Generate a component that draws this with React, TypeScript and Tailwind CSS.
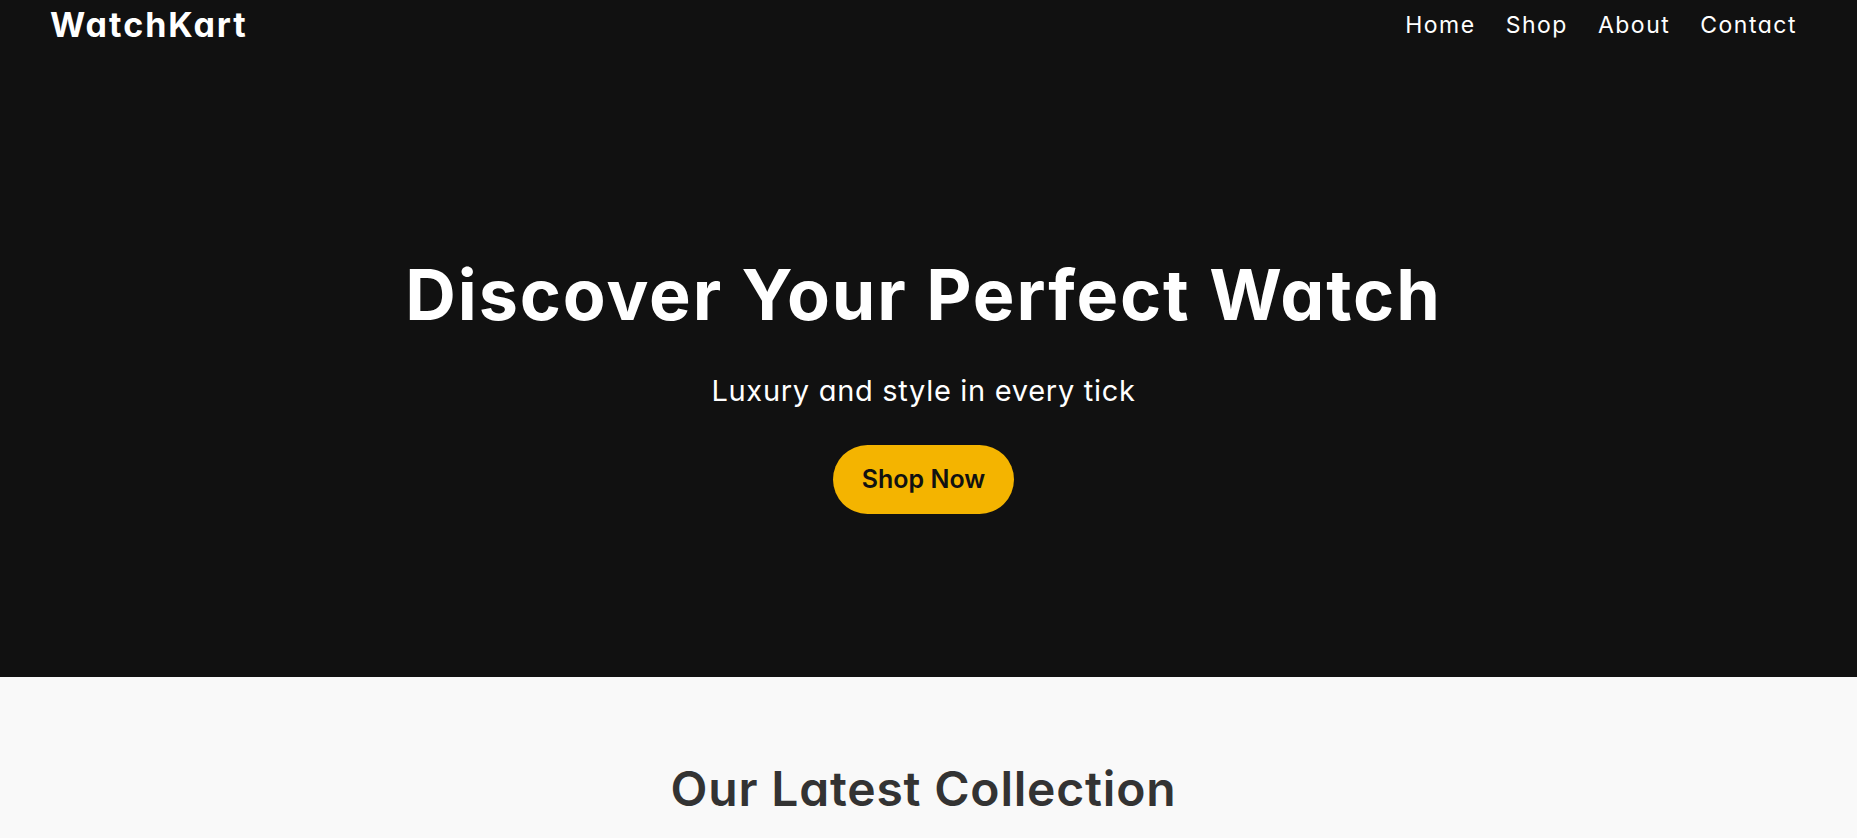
export default function App() {
  const font = { fontFamily: 'Inter, "Open Sans", sans-serif', fontFeatureSettings: '"cv11"' };
  return (
    <div style={font} className="w-full min-h-[838px] bg-[#f9f9f9]">
      <div className="bg-[#111111]">
        <header className="h-[50px] flex items-center justify-between pl-[50px] pr-[60px]">
          <div className="text-white font-bold text-[34px] leading-none tracking-[2px]">WatchKart</div>
          <nav className="flex items-center gap-[30px] text-white text-[23px] leading-none tracking-[1.5px]">
            <a>Home</a>
            <a>Shop</a>
            <a>About</a>
            <a>Contact</a>
          </nav>
        </header>
        <section className="h-[627px] flex flex-col items-center pt-[210px] pr-[10px]">
          <h1 className="text-white font-bold text-[70px] leading-none tracking-[1.9px]">Discover Your Perfect Watch</h1>
          <p className="text-white text-[29px] leading-none mt-[46px] tracking-[0.7px]">Luxury and style in every tick</p>
          <button className="mt-[40px] w-[181px] h-[69px] rounded-full bg-[#f4b400] text-[#111111] font-semibold text-[25px] leading-none flex items-center justify-center">
            Shop Now
          </button>
        </section>
      </div>
      <section className="flex flex-col items-center pt-[88px] pr-[10px]">
        <h2 className="text-[#333333] font-semibold text-[48px] leading-none tracking-[0.8px]">Our Latest Collection</h2>
      </section>
    </div>
  );
}
